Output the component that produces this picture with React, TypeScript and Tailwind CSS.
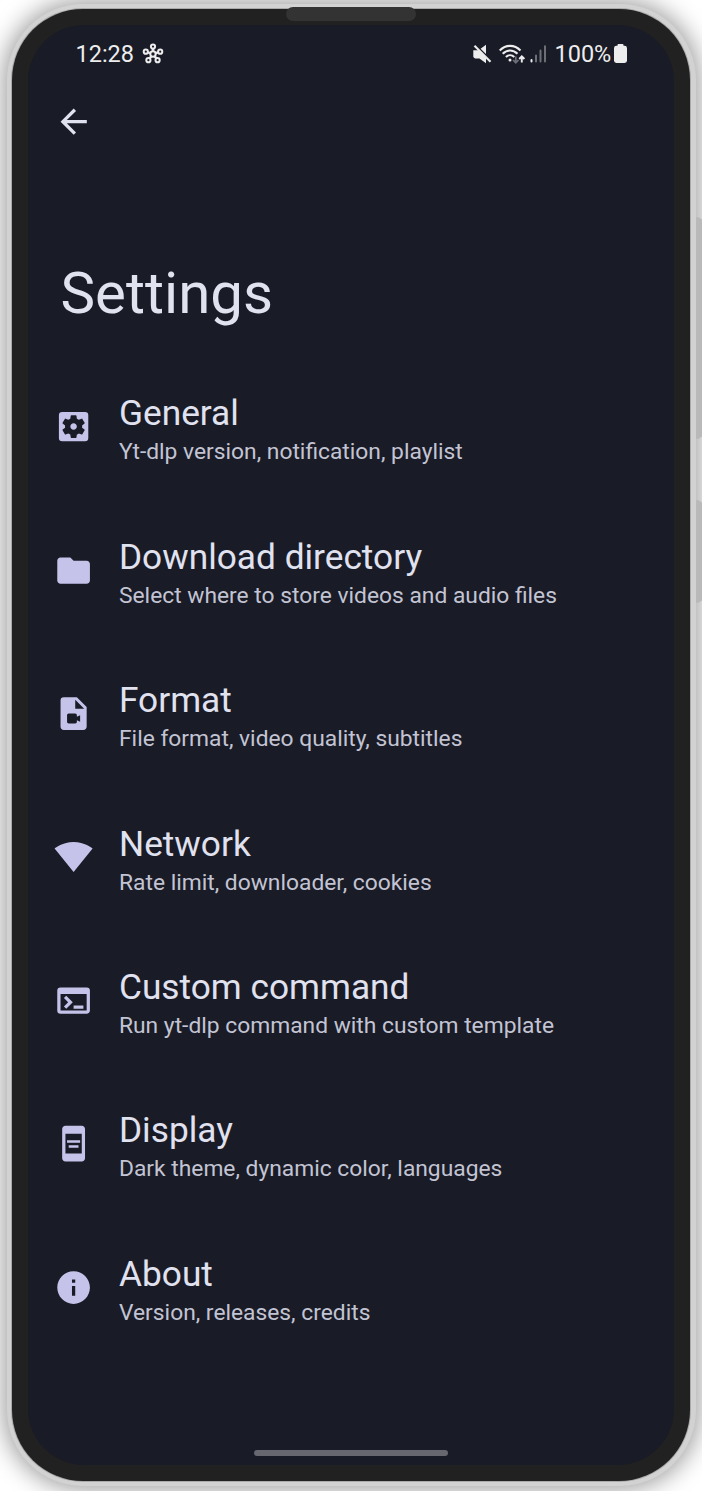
import React from "react";
import {
  MdSettingsApplications,
  MdFolder,
  MdVideoFile,
  MdSignalWifi4Bar,
  MdTerminal,
  MdAod,
  MdInfo,
  MdArrowBack,
} from "react-icons/md";
import type { IconType } from "react-icons";

type Item = { icon: IconType; title: string; detail: string };

const items: Item[] = [
  { icon: MdSettingsApplications, title: "General", detail: "Yt-dlp version, notification, playlist" },
  { icon: MdFolder, title: "Download directory", detail: "Select where to store videos and audio files" },
  { icon: MdVideoFile, title: "Format", detail: "File format, video quality, subtitles" },
  { icon: MdSignalWifi4Bar, title: "Network", detail: "Rate limit, downloader, cookies" },
  { icon: MdTerminal, title: "Custom command", detail: "Run yt-dlp command with custom template" },
  { icon: MdAod, title: "Display", detail: "Dark theme, dynamic color, languages" },
  { icon: MdInfo, title: "About", detail: "Version, releases, credits" },
];

function HubIcon() {
  return (
    <svg className="ml-[9px] h-[22px] w-[22px]" viewBox="0 0 22 22" fill="none" stroke="#ededed" strokeWidth="2">
      <path d="M11 8V5.6M8.2 10.1 5.9 9.3M13.8 10.1l2.3-.8M9.3 13.3l-1.9 2.5M12.7 13.3l1.9 2.5" strokeWidth="2.4" />
      <circle cx="11" cy="11" r="2.7" />
      <circle cx="11" cy="3.6" r="2.1" />
      <circle cx="3.8" cy="8.7" r="2.1" />
      <circle cx="18.2" cy="8.7" r="2.1" />
      <circle cx="6.4" cy="17.2" r="2.1" />
      <circle cx="15.6" cy="17.2" r="2.1" />
    </svg>
  );
}

function MuteIcon() {
  return (
    <svg className="h-[20px] w-[19px]" viewBox="0 0 19 20">
      <path d="M.3 6.3H6L13 13.5v5.8L6.5 14.5H2L.3 13zM7.6 4.7 13 .8v9.2z" fill="#ededed" />
      <path d="m1.5 1.8 16 16" stroke="#ededed" strokeWidth="2.2" />
    </svg>
  );
}

function WifiIcon() {
  return (
    <svg className="ml-[7px] h-[21px] w-[27px]" viewBox="0 0 27 21" fill="none">
      <path d="M.7 6.5C6.7.3 15.5.3 21.5 6.5M3.7 9.8c4.4-4.5 10.4-4.5 14.8 0M6.9 13c2.4-2.4 6-2.4 8.4 0" stroke="#ededed" strokeWidth="2.1" />
      <circle cx="11" cy="16" r="1.5" fill="#ededed" />
      <path d="M16.8 12.5v6M14.1 16l2.7 2.8 2.7-2.8" stroke="#6d6e76" strokeWidth="1.8" />
      <path d="M22.8 18.5v-6M20.2 15l2.6-2.7 2.6 2.7" stroke="#ededed" strokeWidth="1.9" />
    </svg>
  );
}

function SignalIcon() {
  return (
    <svg className="ml-[4px] h-[18px] w-[17px]" viewBox="0 0 17 18" strokeWidth="2" strokeLinecap="round">
      <path d="M1.5 15v1.6" stroke="#ededed" />
      <path d="M6 10.5v6.1M10.5 5.5v11.1M15 1.3v15.3" stroke="#6d6e76" />
    </svg>
  );
}

function BatteryIcon() {
  return (
    <svg className="mb-px ml-[3px] h-[19px] w-[13px]" viewBox="0 0 13 19" fill="#ededed">
      <rect x="3.5" y="0" width="6" height="4" rx="1" />
      <rect x="0" y="1.8" width="13" height="17.2" rx="2.4" />
    </svg>
  );
}

function StatusBar() {
  return (
    <div className="flex h-[58px] items-center pr-[47px] pl-[47.5px] text-[23.5px] text-[#ededed]">
      <span className="w-[57px] pt-px whitespace-nowrap">12:28</span>
      <HubIcon />
      <div className="ml-auto flex items-center">
        <MuteIcon />
        <WifiIcon />
        <SignalIcon />
        <span className="ml-[7.5px] w-[56.5px] pt-px whitespace-nowrap">100%</span>
        <BatteryIcon />
      </div>
    </div>
  );
}

function SettingsRow({ icon: Icon, title, detail }: Item) {
  return (
    <li className="flex h-[143.4px] items-center pl-[26.3px]">
      <Icon className="h-[39.2px] w-[39.2px] shrink-0 text-[#c5c3ea]" />
      <div className="ml-[25.5px] pt-[8px] whitespace-nowrap">
        <div className="text-[35.25px] leading-[42px] text-[#e1e2f0]">{title}</div>
        <div className="text-[22.8px] leading-[35px] text-[#c3c4d3]">{detail}</div>
      </div>
    </li>
  );
}

export default function App() {
  return (
    <div className="relative h-[1491px] w-[702px] overflow-hidden bg-white pt-1 pl-[7px] font-['Roboto',sans-serif]">
      <div className="relative h-[1482px] w-[689px] rounded-[76px] bg-[#d2d2d2] pt-[5px] pr-[6px] pb-[5px] pl-[5px] shadow-[0_0_24px_3px_rgba(0,0,0,0.4)]">
        <div className="h-full rounded-[71px] bg-[#212121] p-4 shadow-[0_0_0_1px_#aaaaaa]">
          <main className="flex h-full flex-col rounded-[56px] bg-[#191b26]">
            <StatusBar />
            <button aria-label="Back" className="ml-[26px] mt-[19px] h-[39.4px] w-[39.4px] text-[#e1e2f0]">
              <MdArrowBack className="h-full w-full" />
            </button>
            <h1 className="mt-[116.6px] ml-[32.5px] h-[70px] text-[58.2px] leading-[70px] text-[#e1e2f0]">Settings</h1>
            <ul className="mt-[27.2px]">
              {items.map((item) => (
                <SettingsRow key={item.title} {...item} />
              ))}
            </ul>
            <div className="mt-auto mb-[9px] ml-[226px] h-[6px] w-[194px] rounded-full bg-[#66676f]" />
          </main>
        </div>
        <div className="absolute top-[3px] left-[279px] h-[14px] w-[130px] rounded-full bg-[#333333]" />
      </div>
      <div className="absolute top-[217px] left-[696px] h-[222px] w-[8px] rounded-r-[8px] bg-[#b9b9b9]" />
      <div className="absolute top-[500px] left-[696px] h-[103px] w-[8px] rounded-r-[8px] bg-[#b9b9b9]" />
    </div>
  );
}
